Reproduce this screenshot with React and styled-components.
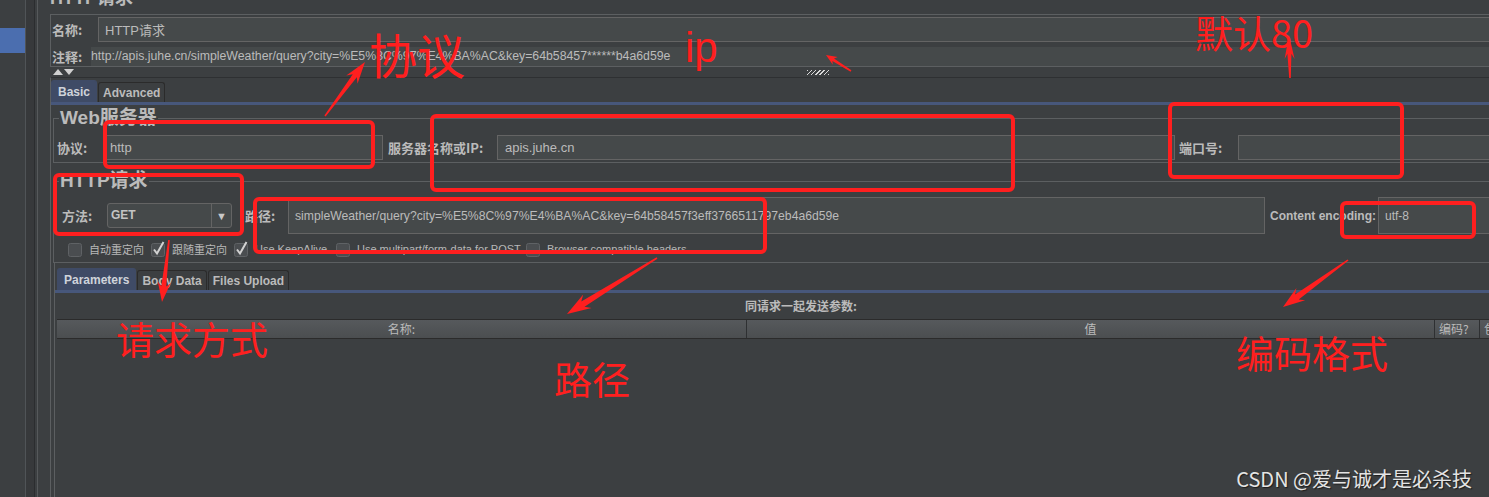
import React from "react";
import styled, { createGlobalStyle } from "styled-components";

const GlobalStyle = createGlobalStyle`
  html, body {
    margin: 0;
    padding: 0;
    background: #3c3f41;
  }
  body {
    font-family: "Liberation Sans", "Noto Sans CJK SC", sans-serif;
    font-size: 12px;
    color: #bbbbbb;
  }
  *, *::before, *::after {
    box-sizing: border-box;
  }
`;

const Screen = styled.div`
  position: relative;
  width: 1489px;
  height: 497px;
  overflow: hidden;
  display: flex;
  background: #3c3f41;
`;

const Sidebar = styled.div`
  width: 26px;
  flex: none;
  padding-top: 28px;
  border-right: 1px solid #505457;
`;

const TreeRow = styled.div`
  height: 25px;
  background: ${p => (p.$selected ? "#4b6eaf" : "transparent")};
`;

const SplitBar = styled.div`
  width: 13px;
  flex: none;
  background: linear-gradient(
    to right,
    #37393b 0 8px,
    #2b2d2f 8px 9px,
    #3c3f41 9px 11px,
    #56595b 11px 12px,
    #3c3f41 12px
  );
`;

const Main = styled.div`
  width: 1508px;
  flex: none;
  padding-left: 11px;
  display: flex;
  flex-direction: column;
`;

const PageTitle = styled.div`
  height: 14px;
  overflow: hidden;
  font-family: "Liberation Sans", "Noto Sans CJK SC", sans-serif;
  font-weight: bold;
  font-size: 18px;
  line-height: 22px;
  color: #bbbbbb;

  span {
    display: block;
    margin-top: -13px;
  }
`;

const NamePanel = styled.div`
  height: 53px;
  border: 1px solid #5c5f61;
  border-right: none;
  padding: 2px 0 0 1px;
  display: flex;
  flex-direction: column;
`;

const FieldRow = styled.div`
  display: flex;
  align-items: center;
  height: ${p => p.$h}px;
  margin-top: ${p => p.$mt || 0}px;
  padding-left: ${p => p.$pl || 0}px;
`;

const Label = styled.span`
  flex: none;
  width: ${p => p.$w}px;
  margin-left: ${p => p.$ml || 0}px;
  font-family: "Noto Sans CJK SC", sans-serif;
  font-weight: bold;
  font-size: 13px;
  color: #bbbbbb;
  white-space: nowrap;
`;

const LatinLabel = styled(Label)`
  font-family: "Liberation Sans", sans-serif;
  font-size: 12px;
`;

const Input = styled.div`
  flex: ${p => (p.$w ? "none" : "1")};
  width: ${p => (p.$w ? `${p.$w}px` : "auto")};
  height: ${p => p.$h || 25}px;
  display: flex;
  align-items: center;
  padding-left: ${p => p.$pad || 6}px;
  background: #45494a;
  border: 1px solid #646464;
  font-family: "Liberation Sans", "Noto Sans CJK SC", sans-serif;
  font-size: ${p => p.$fs || 13}px;
  color: #bbbbbb;
  white-space: nowrap;
  overflow: hidden;
`;

const CommentText = styled.div`
  flex: 1;
  height: 19px;
  line-height: 19px;
  background: #45494a;
  font-size: 12.3px;
  color: #bbbbbb;
  white-space: nowrap;
  overflow: hidden;
`;

const Splitter = styled.div`
  height: 10px;
  display: flex;
  align-items: center;
  padding-left: 2px;
`;

const Grip = styled.span`
  width: 22px;
  height: 5px;
  margin-left: 731px;
  background: repeating-linear-gradient(
    135deg,
    #d8d8d8 0 1px,
    transparent 1px 3px
  );
`;

const TabPane = styled.div`
  border-top: ${p => (p.$noTop ? "none" : "1px solid #2e3032")};
  border-left: 1px solid #5c5f61;
  margin-left: ${p => p.$ml || 0}px;
  margin-top: ${p => p.$mt || 0}px;
  display: flex;
  flex-direction: column;
  flex: 1;
`;

const TabStrip = styled.div`
  height: ${p => p.$h}px;
  display: flex;
  align-items: flex-end;
  padding-left: ${p => p.$pl || 0}px;
  border-bottom: 3px solid #47577b;
`;

const Tab = styled.div`
  height: ${p => (p.$active ? 22 : 20)}px;
  padding: 0 ${p => (p.$active ? 6 : 4)}px;
  display: flex;
  align-items: center;
  font-weight: bold;
  font-size: 12px;
  color: ${p => (p.$active ? "#cfd3da" : "#bbbbbb")};
  background: ${p => (p.$active ? "#3f4b66" : "#3c3f41")};
  border: 1px solid ${p => (p.$active ? "#3f4b66" : "#2b2b2b")};
  border-bottom: none;
  border-radius: 3px 3px 0 0;
  margin-right: 1px;
`;

const BasicBody = styled.div`
  padding-left: 2px;
  display: flex;
  flex-direction: column;
  flex: 1;
`;

const Group = styled.fieldset`
  margin: ${p => p.$mt}px 0 0 0;
  padding: 0 0 ${p => p.$pb}px 0;
  border: 1px solid #5c5f61;
  border-right: none;
  min-width: 0;
`;

const GroupTitle = styled.legend`
  margin-left: 5px;
  padding: 0 1px;
  font-family: "Liberation Sans", "Noto Sans CJK SC", sans-serif;
  font-weight: bold;
  font-size: 19px;
  line-height: 20px;
  color: #bbbbbb;
`;

const Combo = styled.div`
  flex: none;
  width: 125px;
  height: 25px;
  display: flex;
  background: #45494a;
  border: 1px solid #646464;
  border-radius: 3px;
`;

const ComboValue = styled.span`
  flex: 1;
  padding-left: 3px;
  line-height: 23px;
  font-weight: bold;
  font-size: 12px;
  color: #c4c4c4;
`;

const ComboButton = styled.span`
  width: 20px;
  border-left: 1px solid #646464;
  display: flex;
  align-items: center;
  justify-content: center;
  font-size: 11px;
  color: #c8c8c8;
`;

const CheckRow = styled.div`
  height: 14px;
  margin-top: 8px;
  padding-left: 14px;
  display: flex;
  align-items: center;
`;

const CheckItem = styled.div`
  flex: none;
  width: ${p => (p.$w ? `${p.$w}px` : "auto")};
  display: flex;
  align-items: center;
  gap: 7px;
  font-family: "Liberation Sans", "Noto Sans CJK SC", sans-serif;
  font-size: 11px;
  color: #b8b8b8;
  white-space: nowrap;
`;

const Caption = styled.div`
  height: 26px;
  line-height: 26px;
  text-align: center;
  font-family: "Noto Sans CJK SC", sans-serif;
  font-weight: bold;
  font-size: 12px;
  color: #bbbbbb;
`;

const Table = styled.div`
  flex: 1;
  margin-left: 2px;
  display: flex;
  flex-direction: column;
`;

const TableHead = styled.div`
  height: 20px;
  display: flex;
  border-top: 1px solid #2b2b2b;
  border-bottom: 1px solid #2b2b2b;
  background: linear-gradient(#56595c, #4b4e50);
`;

const HeadCell = styled.div`
  flex: none;
  width: ${p => p.$w}px;
  border-left: ${p => (p.$first ? "none" : "1px solid #2e3032")};
  text-align: ${p => (p.$left ? "left" : "center")};
  padding-left: ${p => (p.$left ? 4 : 0)}px;
  line-height: 18px;
  font-family: "Noto Sans CJK SC", sans-serif;
  font-size: 12px;
  color: #bbbbbb;
  white-space: nowrap;
  overflow: hidden;
`;

const Overlay = styled.svg`
  position: absolute;
  left: 0;
  top: 0;
  pointer-events: none;
`;

const Note = styled.span`
  position: absolute;
  left: ${p => p.$x}px;
  top: ${p => p.$y}px;
  font-family: ${p =>
    p.$latin ? '"Liberation Sans", sans-serif' : '"Noto Sans CJK SC", sans-serif'};
  font-size: ${p => p.$size}px;
  line-height: 1;
  color: #ff1f1f;
  white-space: nowrap;
`;

const Watermark = styled.span`
  position: absolute;
  right: 17px;
  bottom: 8px;
  font-family: "Noto Sans CJK SC", sans-serif;
  font-size: 20px;
  line-height: 1;
  color: #e4e4e4;
  text-shadow: 1px 1px 1px #1c1c1c;
  white-space: nowrap;
`;

const CheckBox = ({ checked }) => (
  <svg width="14" height="16" viewBox="0 0 14 16">
    <rect x="0.5" y="2.5" width="13" height="13" rx="2" fill="#4a4d50" stroke="#5f6265" />
    {checked && (
      <path d="M3 8.5 L6 12.5 L12.5 1" fill="none" stroke="#d2d2d2" strokeWidth="2" />
    )}
  </svg>
);

const SplitArrows = () => (
  <svg width="24" height="8" viewBox="0 0 24 8">
    <path d="M1 7 L6 1 L11 7 Z" fill="#d0d0d0" />
    <path d="M12 1 L22 1 L17 7 Z" fill="#d0d0d0" />
  </svg>
);

const arrowPoints = ([x1, y1], [x2, y2], head, headW, shaft) => {
  const len = Math.hypot(x2 - x1, y2 - y1);
  const ux = (x2 - x1) / len;
  const uy = (y2 - y1) / len;
  const nx = -uy;
  const ny = ux;
  const bx = x2 - ux * head;
  const by = y2 - uy * head;
  const kx = x2 - ux * head * 0.78;
  const ky = y2 - uy * head * 0.78;
  const pts = [
    [x1 + nx * 0.8, y1 + ny * 0.8],
    [kx + (nx * shaft) / 2, ky + (ny * shaft) / 2],
    [bx + (nx * headW) / 2, by + (ny * headW) / 2],
    [x2, y2],
    [bx - (nx * headW) / 2, by - (ny * headW) / 2],
    [kx - (nx * shaft) / 2, ky - (ny * shaft) / 2],
    [x1 - nx * 0.8, y1 - ny * 0.8],
  ];
  return pts.map(p => p.map(v => v.toFixed(1)).join(",")).join(" ");
};

const boxes = [
  [103, 120, 272, 49],
  [430, 114, 585, 78],
  [1168, 102, 236, 77],
  [53, 173, 191, 63],
  [253, 197, 514, 57],
  [1340, 201, 136, 38],
];

const arrows = [
  [[325, 116], [365, 62], 22, 14, 5],
  [[851, 71], [826, 55], 11, 9, 3],
  [[1290, 78], [1289, 35], 24, 10, 4],
  [[169, 240], [162, 302], 20, 13, 5],
  [[657, 258], [567, 314], 24, 16, 6],
  [[1348, 260], [1283, 307], 22, 15, 6],
];

const notes = [
  { text: "协议", x: 369, y: 29, size: 48 },
  { text: "ip", x: 685, y: 27, size: 42, latin: true },
  { text: "默认80", x: 1195, y: 13, size: 38 },
  { text: "请求方式", x: 116, y: 319, size: 38 },
  { text: "路径", x: 554, y: 359, size: 38 },
  { text: "编码格式", x: 1236, y: 333, size: 38 },
];

const checks = [
  { label: "自动重定向", checked: false, w: 83 },
  { label: "跟随重定向", checked: true, w: 83 },
  { label: "Use KeepAlive", checked: true, w: 102 },
  { label: "Use multipart/form-data for POST", checked: false, w: 190 },
  { label: "Browser compatible headers", checked: false },
];

export default function App() {
  return (
    <>
      <GlobalStyle />
      <Screen>
        <Sidebar>
          <TreeRow $selected />
        </Sidebar>
        <SplitBar />
        <Main>
          <PageTitle>
            <span>HTTP请求</span>
          </PageTitle>
          <NamePanel>
            <FieldRow $h={25}>
              <Label $w={46}>名称:</Label>
              <Input>HTTP请求</Input>
            </FieldRow>
            <FieldRow $h={19} $mt={5}>
              <Label $w={39}>注释:</Label>
              <CommentText>
                http://apis.juhe.cn/simpleWeather/query?city=%E5%8C%97%E4%BA%AC&key=64b58457******b4a6d59e
              </CommentText>
            </FieldRow>
          </NamePanel>
          <Splitter>
            <SplitArrows />
            <Grip />
          </Splitter>
          <TabPane>
            <TabStrip $h={27}>
              <Tab $active>Basic</Tab>
              <Tab>Advanced</Tab>
            </TabStrip>
            <BasicBody>
              <Group $mt={3} $pb={2}>
                <GroupTitle>Web服务器</GroupTitle>
                <FieldRow $h={25} $mt={7} $pl={3}>
                  <Label $w={46}>协议:</Label>
                  <Input $w={280}>http</Input>
                  <Label $w={109} $ml={5}>服务器名称或IP:</Label>
                  <Input $w={678} $pad={7}>apis.juhe.cn</Input>
                  <Label $w={59} $ml={4}>端口号:</Label>
                  <Input />
                </FieldRow>
              </Group>
              <Group $mt={8} $pb={6}>
                <GroupTitle>HTTP请求</GroupTitle>
                <FieldRow $h={37} $mt={6} $pl={8}>
                  <Label $w={45}>方法:</Label>
                  <Combo>
                    <ComboValue>GET</ComboValue>
                    <ComboButton>▼</ComboButton>
                  </Combo>
                  <Label $w={43} $ml={13}>路径:</Label>
                  <Input $w={977} $h={37} $fs={12.2}>
                    simpleWeather/query?city=%E5%8C%97%E4%BA%AC&key=64b58457f3eff3766511797eb4a6d59e
                  </Input>
                  <LatinLabel $w={108} $ml={5}>Content encoding:</LatinLabel>
                  <Input $h={37} $fs={12}>utf-8</Input>
                </FieldRow>
                <CheckRow>
                  {checks.map(c => (
                    <CheckItem key={c.label} $w={c.w}>
                      <CheckBox checked={c.checked} />
                      {c.label}
                    </CheckItem>
                  ))}
                </CheckRow>
              </Group>
              <TabPane $ml={1} $noTop>
                <TabStrip $h={30} $pl={2}>
                  <Tab $active>Parameters</Tab>
                  <Tab>Body Data</Tab>
                  <Tab>Files Upload</Tab>
                </TabStrip>
                <Caption>同请求一起发送参数:</Caption>
                <Table>
                  <TableHead>
                    <HeadCell $first $w={689}>名称:</HeadCell>
                    <HeadCell $w={688}>值</HeadCell>
                    <HeadCell $w={45} $left>编码?</HeadCell>
                    <HeadCell $w={70} $left>包含等于?</HeadCell>
                  </TableHead>
                </Table>
              </TabPane>
            </BasicBody>
          </TabPane>
        </Main>

        <Overlay width="1489" height="497" viewBox="0 0 1489 497">
          {boxes.map(([x, y, w, h]) => (
            <rect
              key={`${x}-${y}`}
              x={x + 2}
              y={y + 2}
              width={w - 4}
              height={h - 4}
              rx="4"
              fill="none"
              stroke="#ff1f1f"
              strokeWidth="4"
            />
          ))}
          {arrows.map(([a, b, head, headW, shaft]) => (
            <polygon
              key={`${a[0]}-${a[1]}`}
              points={arrowPoints(a, b, head, headW, shaft)}
              fill="#ff1f1f"
            />
          ))}
        </Overlay>
        {notes.map(n => (
          <Note key={n.text} $x={n.x} $y={n.y} $size={n.size} $latin={n.latin}>
            {n.text}
          </Note>
        ))}
        <Watermark>CSDN @爱与诚才是必杀技</Watermark>
      </Screen>
    </>
  );
}
